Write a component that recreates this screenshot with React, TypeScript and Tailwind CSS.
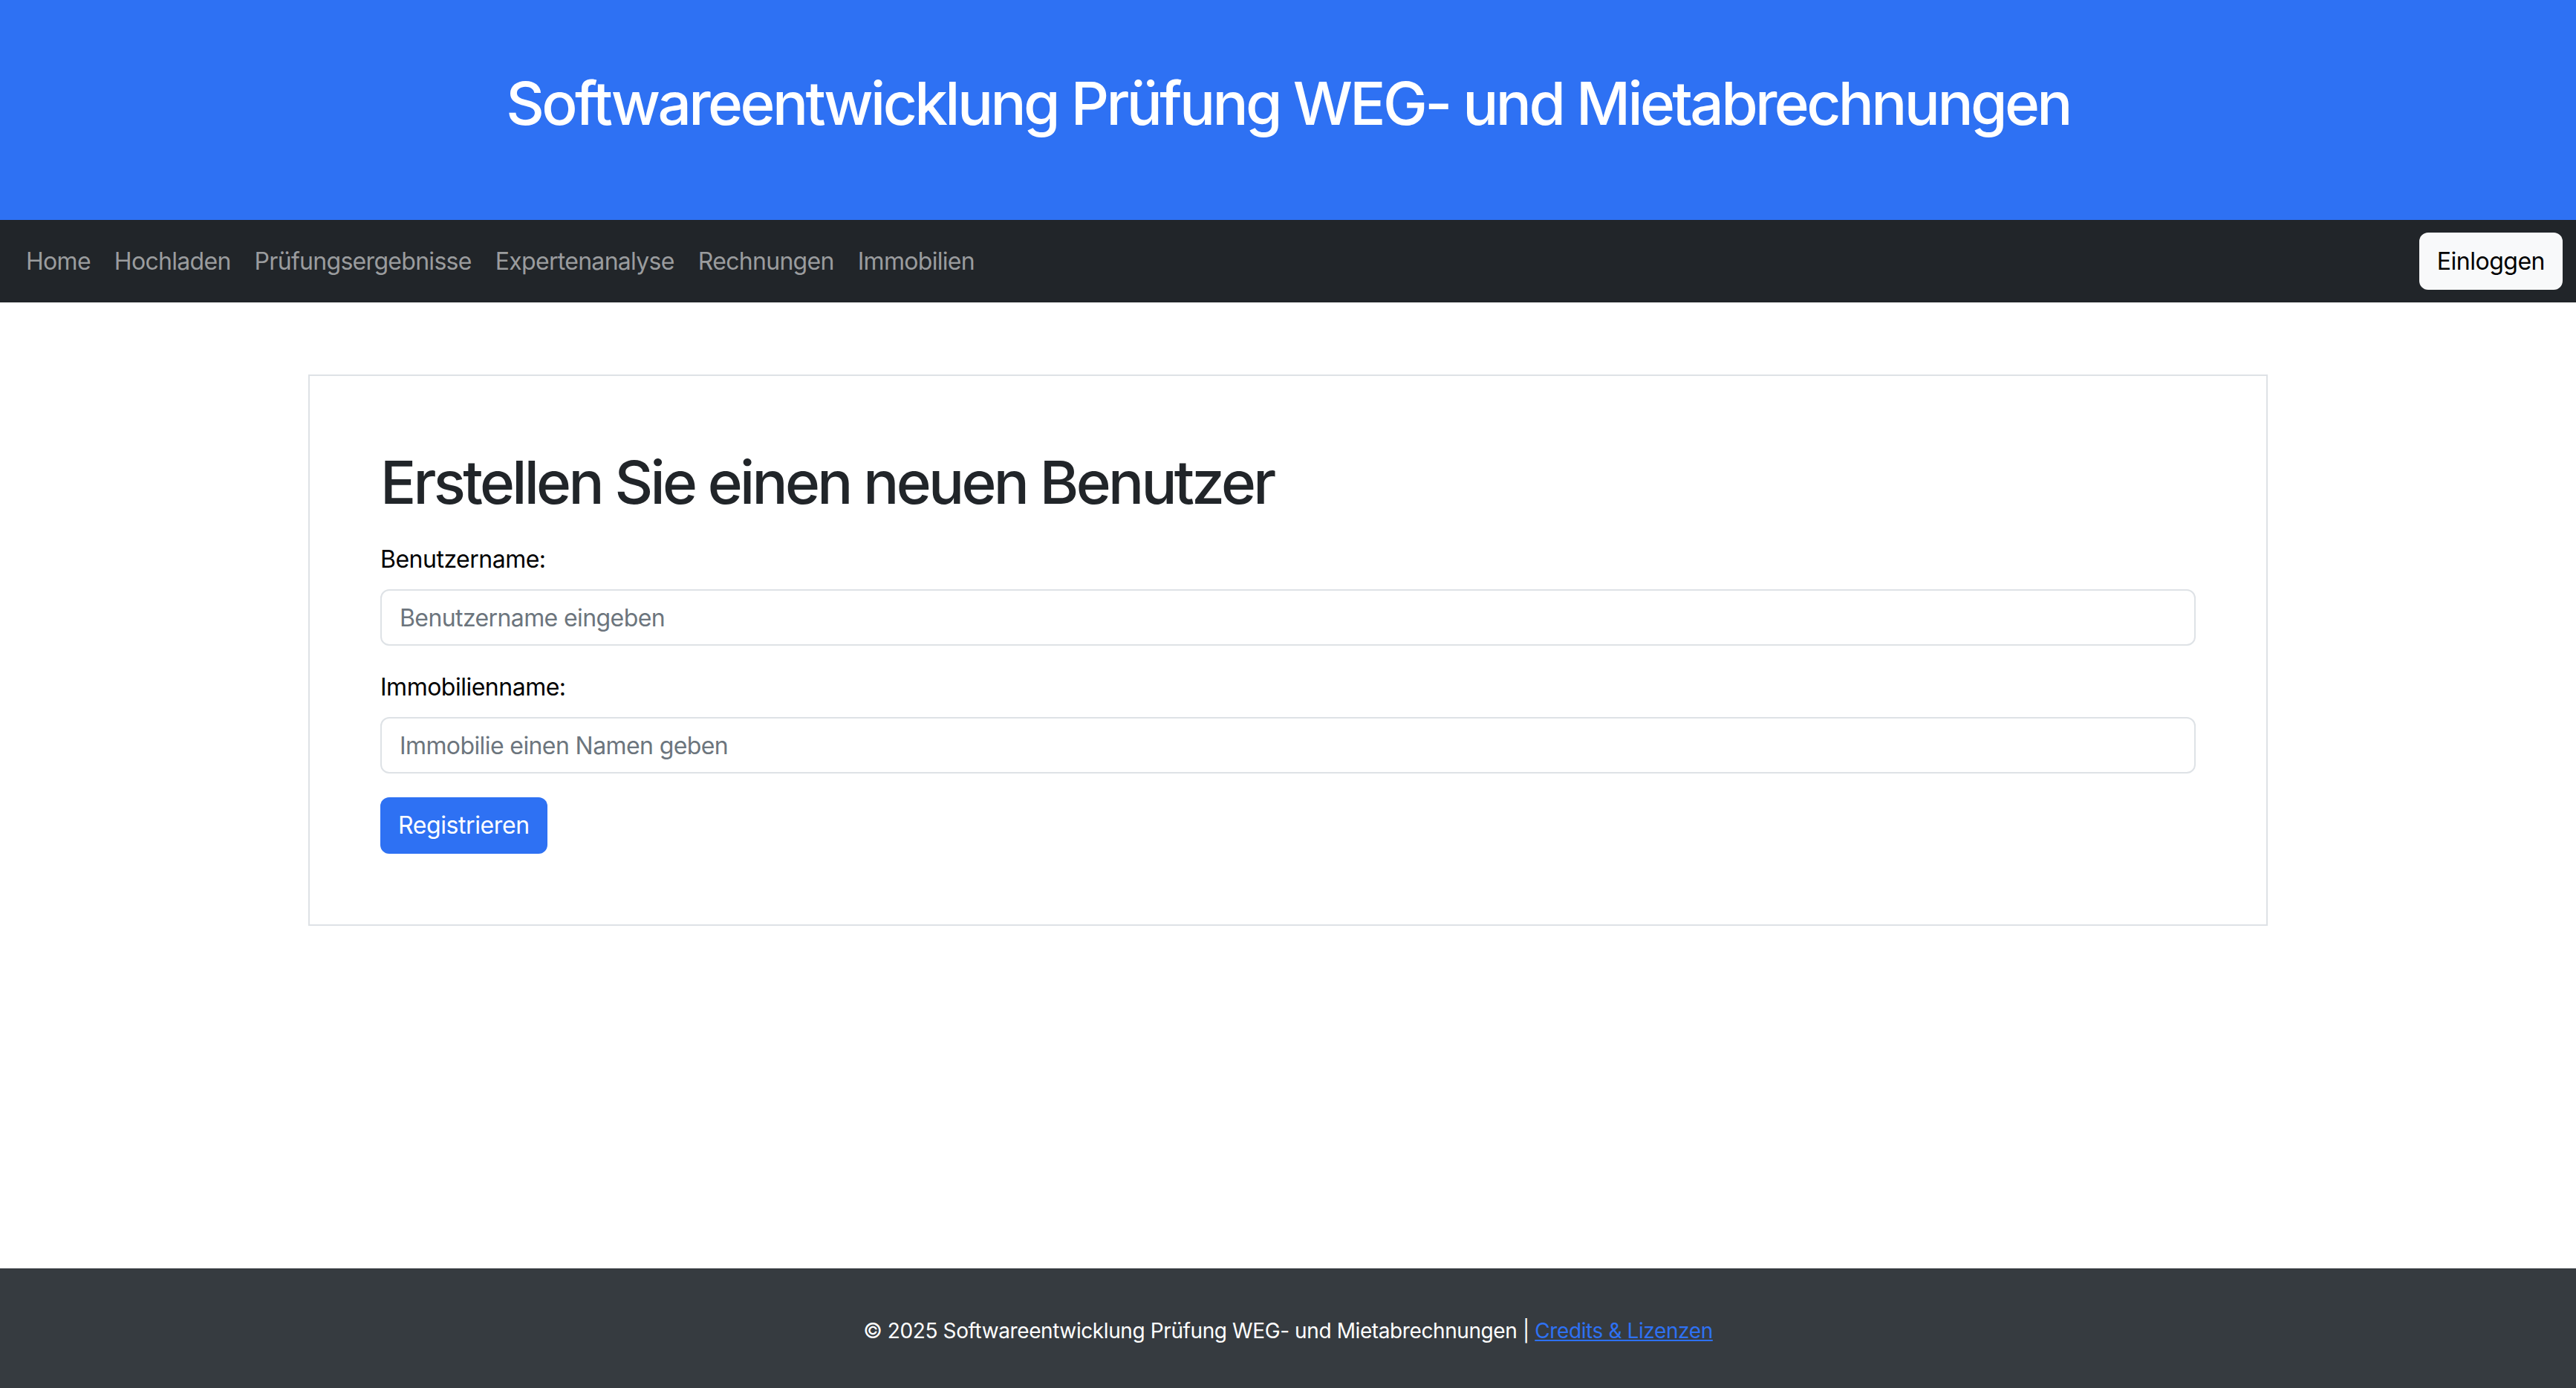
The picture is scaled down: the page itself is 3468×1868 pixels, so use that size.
export default function App() {
  const links = ["Home", "Hochladen", "Prüfungsergebnisse", "Expertenanalyse", "Rechnungen", "Immobilien"];

  return (
    <div className="min-h-screen flex flex-col bg-white text-[#212529] font-['Inter','Liberation_Sans',sans-serif]">
      <header className="bg-[#2e71f3] pt-[91px] pb-[109px] text-center">
        <h1 className="text-[80px] leading-[1.2] font-medium text-white tracking-[-3.6px]">
          Softwareentwicklung Prüfung WEG- und Mietabrechnungen
        </h1>
      </header>

      <nav className="bg-[#212529] h-[111px] flex items-center justify-between pl-[19px] pr-[18px]">
        <ul className="flex items-center">
          {links.map((l) => (
            <li key={l}>
              <a href="#" className="block px-[16px] text-[32px] leading-[1.5] text-[#9a9c9e] tracking-[-0.7px]">
                {l}
              </a>
            </li>
          ))}
        </ul>
        <button className="h-[77px] px-[24px] rounded-[12px] bg-[#f8f9fa] text-black text-[32px] tracking-[-0.5px]">
          Einloggen
        </button>
      </nav>

      <main className="flex-1 pt-[97px]">
        <div className="mx-auto w-[2638px] border-2 border-[#dee2e6] p-[95px]">
          <h2 className="text-[80px] leading-[1.2] font-medium tracking-[-3.7px] mb-[32px]">
            Erstellen Sie einen neuen Benutzer
          </h2>
          <form className="flex flex-col" onSubmit={(e) => e.preventDefault()}>
            <label className="text-[32px] leading-[1.5] text-black mb-[16px] tracking-[-0.5px]">Benutzername:</label>
            <input
              placeholder="Benutzername eingeben"
              className="h-[76px] border-2 border-[#dee2e6] rounded-[12px] px-[24px] text-[32px] placeholder:text-[#6c757d] mb-[32px] tracking-[-0.6px] outline-none"
            />
            <label className="text-[32px] leading-[1.5] text-black mb-[16px] tracking-[-0.5px]">Immobilienname:</label>
            <input
              placeholder="Immobilie einen Namen geben"
              className="h-[76px] border-2 border-[#dee2e6] rounded-[12px] px-[24px] text-[32px] placeholder:text-[#6c757d] mb-[32px] tracking-[-0.6px] outline-none"
            />
            <div>
              <button className="h-[76px] px-[24px] rounded-[12px] bg-[#2e71f3] text-white text-[32px] tracking-[-0.4px]">
                Registrieren
              </button>
            </div>
          </form>
        </div>
      </main>

      <footer className="bg-[#363b40] pt-[63px] pb-[56px] text-center text-white text-[28px] leading-[1.5] tracking-[-0.4px]">
        © 2025 Softwareentwicklung Prüfung WEG- und Mietabrechnungen |{" "}
        <a href="#" className="text-[#2e71f3] underline">Credits &amp; Lizenzen</a>
      </footer>
    </div>
  );
}
